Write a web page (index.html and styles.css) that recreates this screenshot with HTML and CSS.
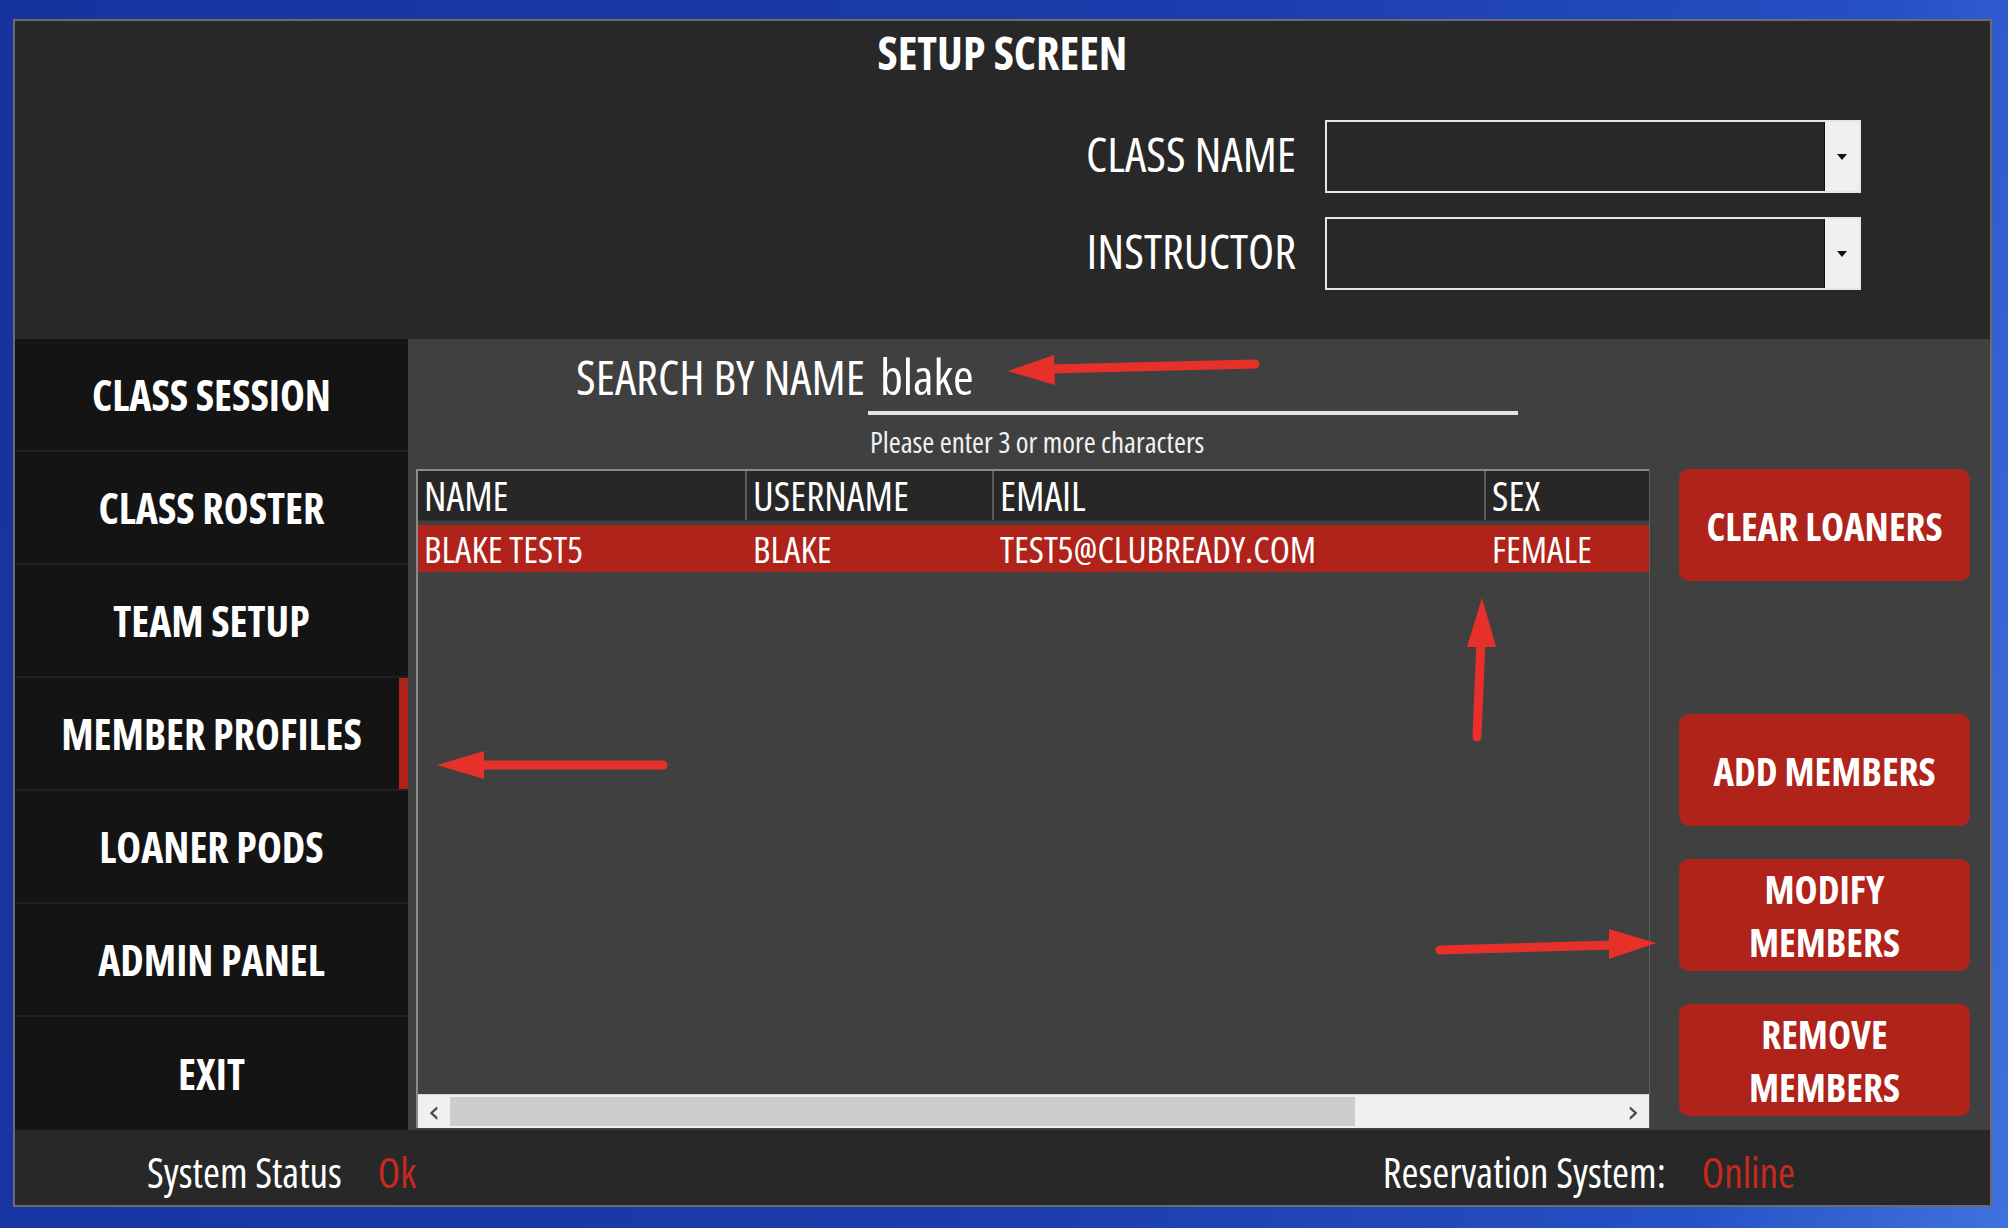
FILE: index.html
```html
<!DOCTYPE html>
<html lang="en">
<head>
    <meta charset="UTF-8">
    <title>Setup Screen</title>
    <link rel="stylesheet" href="styles.css">
</head>
<body>

    <div class="window">
        <div class="header">
            <h1 class="title">SETUP SCREEN</h1>
            <div class="header-form">
                <div class="form-row">
                    <label>CLASS NAME</label>
                    <div class="combo"><span class="combo-value"></span><span class="combo-btn"><span class="caret"></span></span></div>
                </div>
                <div class="form-row">
                    <label>INSTRUCTOR</label>
                    <div class="combo"><span class="combo-value"></span><span class="combo-btn"><span class="caret"></span></span></div>
                </div>
            </div>
        </div>

        <div class="main">
            <div class="sidebar">
                <a href="#" class="nav-item">CLASS SESSION</a>
                <a href="#" class="nav-item">CLASS ROSTER</a>
                <a href="#" class="nav-item">TEAM SETUP</a>
                <a href="#" class="nav-item active">MEMBER PROFILES</a>
                <a href="#" class="nav-item">LOANER PODS</a>
                <a href="#" class="nav-item">ADMIN PANEL</a>
                <a href="#" class="nav-item">EXIT</a>
            </div>

            <div class="content">
                <div class="search-row">
                    <span class="search-label">SEARCH BY NAME</span>
                    <div class="search-input">blake</div>
                </div>
                <div class="hint">Please enter 3 or more characters</div>

                <div class="work-row">
                    <div class="grid">
                        <div class="grid-head">
                            <div class="cell col-name">NAME</div>
                            <div class="cell col-user">USERNAME</div>
                            <div class="cell col-email">EMAIL</div>
                            <div class="cell col-sex">SEX</div>
                        </div>
                        <div class="grid-row selected">
                            <div class="cell col-name">BLAKE TEST5</div>
                            <div class="cell col-user">BLAKE</div>
                            <div class="cell col-email">TEST5@CLUBREADY.COM</div>
                            <div class="cell col-sex">FEMALE</div>
                        </div>
                        <div class="grid-body"></div>
                        <div class="hscroll">
                            <span class="scroll-arrow">&#8249;</span>
                            <div class="scroll-track"><div class="scroll-thumb"></div></div>
                            <span class="scroll-arrow">&#8250;</span>
                        </div>
                    </div>

                    <div class="actions">
                        <button class="action-btn">CLEAR LOANERS</button>
                        <div class="actions-lower">
                            <button class="action-btn">ADD MEMBERS</button>
                            <button class="action-btn two-line"><span>MODIFY</span><span>MEMBERS</span></button>
                            <button class="action-btn two-line"><span>REMOVE</span><span>MEMBERS</span></button>
                        </div>
                    </div>
                </div>
            </div>
        </div>

        <div class="footer">
            <div class="status">
                <span class="status-label">System Status</span>
                <span class="status-value">Ok</span>
            </div>
            <div class="status status-right">
                <span class="status-label">Reservation System:</span>
                <span class="status-value">Online</span>
            </div>
        </div>

        <!-- annotation arrows drawn over the screenshot -->
        <svg class="annotations" width="2008" height="1228" viewBox="0 0 2008 1228">
            <g fill="#e8302a" stroke="#e8302a" stroke-linecap="round">
                <line x1="1255" y1="364" x2="1048" y2="369" stroke-width="9"/>
                <polygon points="1008,371 1054,355 1055,385" stroke="none"/>

                <line x1="663" y1="765" x2="478" y2="765" stroke-width="9"/>
                <polygon points="437,765 484,751 484,779" stroke="none"/>

                <line x1="1477" y1="737" x2="1481" y2="640" stroke-width="9"/>
                <polygon points="1482,598 1496,647 1467,647" stroke="none"/>

                <line x1="1440" y1="950" x2="1615" y2="945" stroke-width="9"/>
                <polygon points="1656,943 1609,929 1609,959" stroke="none"/>
            </g>
        </svg>
    </div>

</body>
</html>
```
FILE: styles.css
```css
* {
    box-sizing: border-box;
}

body {
    margin: 0;
    height: 1228px;
    overflow: hidden;
    background: linear-gradient(100deg, #1733a0 0%, #1c3cad 55%, #2550c4 85%, #3f72de 100%);
    font-family: "Open Sans", "Roboto Condensed", sans-serif;
    font-stretch: 75%;
    color: #ffffff;
}

.window {
    position: relative;
    width: 1979px;
    height: 1188px;
    margin: 19px 0 0 13px;
    border: 2px solid #6c6c6c;
    background-color: #282828;
    display: flex;
    flex-direction: column;
}

/* header */
.header {
    height: 318px;
    flex: none;
    padding-top: 8px;
    background-color: #282828;
}

.title {
    margin: 0;
    font-size: 46px;
    line-height: 1;
    font-weight: 700;
    text-align: center;
}

.header-form {
    display: flex;
    flex-direction: column;
    align-items: flex-end;
    gap: 24px;
    margin-top: 45px;
    padding-right: 129px;
}

.form-row {
    display: flex;
    align-items: center;
    gap: 29px;
}

.form-row label {
    font-size: 48px;
    line-height: 1;
    margin-top: -6px;
}

.combo {
    display: flex;
    width: 536px;
    height: 73px;
    border: 2px solid #e6e6e6;
    background-color: #282828;
}

.combo-value {
    flex: 1;
    border-right: 1px solid #111;
}

.combo-btn {
    width: 34px;
    background-color: #f0f0f0;
    display: flex;
    align-items: center;
    justify-content: center;
}

.caret {
    width: 0;
    height: 0;
    border-left: 5px solid transparent;
    border-right: 5px solid transparent;
    border-top: 6px solid #111;
}

/* main */
.main {
    display: flex;
    height: 791px;
    flex: none;
}

.sidebar {
    width: 393px;
    background-color: #141414;
    display: flex;
    flex-direction: column;
}

.nav-item {
    height: 113px;
    flex: none;
    display: flex;
    align-items: center;
    justify-content: center;
    border-bottom: 2px solid #202020;
    color: #ffffff;
    text-decoration: none;
    font-size: 42px;
    font-weight: 700;
}

.nav-item:last-child {
    border-bottom: none;
}

.nav-item.active {
    box-shadow: inset -9px 0 0 #b0231a;
}

.content {
    flex: 1;
    background-color: #404040;
    padding-top: 12px;
}

.search-row {
    display: flex;
    align-items: baseline;
    gap: 3px;
    padding-left: 168px;
}

.search-label {
    font-size: 48px;
    line-height: 1;
}

.search-input {
    width: 650px;
    padding: 0 0 10px 12px;
    border-bottom: 4px solid #e4e4e4;
    font-size: 50px;
    line-height: 1;
}

.hint {
    margin-top: 12px;
    padding-left: 462px;
    font-size: 29px;
    line-height: 1;
    color: #f2f2f2;
}

.work-row {
    display: flex;
    gap: 29px;
    margin-top: 13px;
    padding-left: 8px;
}

/* data grid */
.grid {
    width: 1234px;
    height: 659px;
    display: flex;
    flex-direction: column;
    border-left: 2px solid #8a8a8a;
    border-right: 1px solid #5c5c5c;
}

.grid-head,
.grid-row {
    display: flex;
    flex: none;
}

.grid-head {
    height: 52px;
    background-color: #272727;
    border-top: 2px solid #8a8a8a;
    border-bottom: 1px solid #333;
    font-size: 40px;
}

.grid-head .cell {
    border-right: 2px solid #5a5a5a;
}

.grid-head .cell:last-child {
    border-right: none;
}

.grid-row {
    height: 47px;
    margin-top: 4px;
    font-size: 37px;
}

.grid-row.selected {
    background-color: #b0231a;
}

.cell {
    display: flex;
    align-items: center;
    padding-left: 6px;
    line-height: 1;
    white-space: nowrap;
}

.col-name {
    width: 329px;
}

.col-user {
    width: 247px;
}

.col-email {
    width: 492px;
}

.col-sex {
    flex: 1;
}

.grid-body {
    flex: 1;
}

.hscroll {
    height: 34px;
    flex: none;
    display: flex;
    align-items: center;
    background-color: #f0f0f0;
    border-top: 1px solid #d8d8d8;
}

.scroll-arrow {
    width: 32px;
    text-align: center;
    color: #444;
    font-family: "DejaVu Sans", sans-serif;
    font-stretch: normal;
    font-size: 30px;
    line-height: 1;
}

.scroll-track {
    flex: 1;
    height: 100%;
    padding: 2px 0;
}

.scroll-thumb {
    width: 905px;
    height: 100%;
    background-color: #cdcdcd;
}

/* buttons */
.actions {
    width: 291px;
    display: flex;
    flex-direction: column;
    justify-content: space-between;
    padding-bottom: 12px;
}

.actions-lower {
    display: flex;
    flex-direction: column;
    gap: 33px;
}

.action-btn {
    height: 112px;
    width: 100%;
    border: none;
    border-radius: 10px;
    background-color: #b0231a;
    color: #ffffff;
    font-family: inherit;
    font-stretch: 75%;
    font-size: 39px;
    font-weight: 700;
    line-height: 1;
    cursor: pointer;
}

.action-btn.two-line {
    display: flex;
    flex-direction: column;
    align-items: center;
    justify-content: center;
    gap: 0;
}

.action-btn.two-line span {
    display: block;
    line-height: 53px;
}

/* footer */
.footer {
    flex: 1;
    display: flex;
    align-items: center;
    justify-content: space-between;
    padding: 10px 195px 0 132px;
    background-color: #282828;
}

.status {
    display: flex;
    gap: 36px;
    font-size: 41px;
    line-height: 1;
}

.status-value {
    color: #c8281e;
}

.annotations {
    position: absolute;
    left: -15px;
    top: -21px;
    pointer-events: none;
}
```
